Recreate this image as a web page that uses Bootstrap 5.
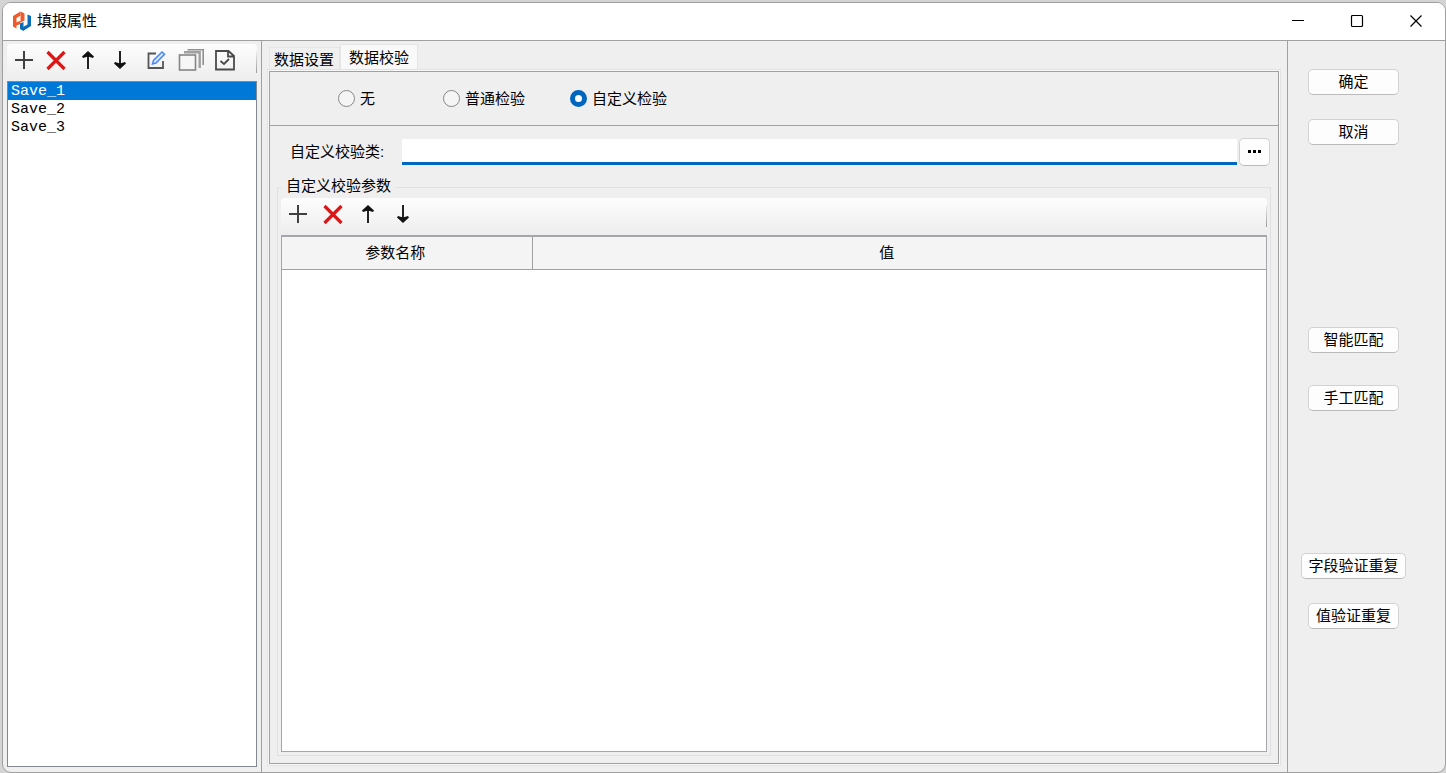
<!DOCTYPE html>
<html lang="zh-CN">
<head>
<meta charset="utf-8">
<meta name="viewport" content="width=device-width, initial-scale=1">
<title>填报属性</title>
<link href="https://cdn.jsdelivr.net/npm/bootstrap@5.3.0/dist/css/bootstrap.min.css" rel="stylesheet">
<style>
  :root { --face: #efefef; --line: #a0a0a0; --accent: #0067c0; }
  body { font: 15px/20px "Liberation Sans", "Noto Sans CJK SC", sans-serif; color: #000; background: #d4d4d4; padding: 2px 0 0 2px; }
  button { font: inherit; color: inherit; }
  .dialog { background: var(--face); border: 1px solid var(--line); border-radius: 9px; }
  .title-bar { height: 38px; padding-bottom: 2px; background: #fff; border-bottom: 1px solid var(--line); }
  .title-bar h1 { font-size: 15px; line-height: 20px; }
  .win-btn { width: 59px; height: 34px; }
  .side { width: 259px; padding: 3px 4px 5px; border-right: 1px solid var(--line); }
  .tools { height: 37px; padding-bottom: 5px; background: linear-gradient(#fdfdfd, #ededed); border-radius: 4px; position: relative; }
  .tools::after { content: ""; position: absolute; right: 0; top: 7px; bottom: 8px; width: 1px; background: linear-gradient(#eee, #999); }
  .tools svg { display: block; }
  .tool { width: 20px; height: 24px; }
  .side-tools { padding-left: 7px; }
  .param-tools { padding-left: 7px; gap: 15px; }
  .files { border: 1px solid #828790; background: #fff; font: 15px/18px "Liberation Mono", monospace; }
  .files button { padding: 0 3px; height: 18px; line-height: 20px; }
  .files .chosen { background: #0078d7; color: #fff; }
  .main-part { padding: 3px 8px 8px 7px; }
  .tab-btn { height: 24px; border: 1px solid #e5e5e5; border-bottom: 0; padding: 0 5px 0 4px; background: #f0f0f0; line-height: 22px; }
  .tab-btn.chosen { height: 27px; background: #f9f9f9; padding: 0 8px; }
  .page-edge { border: 1px solid var(--line); outline: 1px solid #f9f9f9; box-shadow: 0 0 0 2px #e2e2e2; }
  .kinds { height: 54px; border-bottom: 1px solid var(--line); padding-left: 68px; }
  .kinds .form-check-input { width: 17px; height: 17px; margin: 0 5px 0 0; border: 1px solid #868686; background-color: #f5f5f5; }
  .kinds .form-check-input:checked { border: 5px solid var(--accent); background: #fff; }
  .kinds .gap-wide { margin-right: 64px; }
  .kinds .gap-mid { margin-right: 45px; }
  .class-label { margin: 0 18px 0 4px; }
  .class-input { height: 26px; border: 0; border-bottom: 3px solid var(--accent); border-radius: 0; background: #fff; }
  .push { min-width: 91px; height: 26px; padding: 0 6px; background: #fdfdfd; border: 1px solid #d2d2d2; border-bottom-color: #bababa; border-radius: 5px; line-height: 24px; }
  .push-dots { min-width: 31px; height: 28px; margin-left: 2px; }
  .params { border: 1px solid #e0e0e0; margin: 21px 7px 7px; padding: 0 3px 3px; }
  .params legend { float: none; width: auto; font-size: 15px; line-height: 20px; padding: 0 5px; margin: -12px 0 2px; background: var(--face); align-self: flex-start; }
  .grid-box { border: 1px solid #a5a5ab; border-top-width: 2px; background: #fff; }
  .grid-box th { height: 32px; font-weight: 400; text-align: center; padding: 0; background: #f4f4f4; border-bottom: 1px solid var(--line); }
  .grid-box th:first-child { width: 25.5%; padding-right: 24px; border-right: 1px solid var(--line); }
  .grid-box th:last-child { padding-right: 26px; }
  .actions { width: 158px; padding: 28px 26px 0 0; border-left: 1px solid var(--line); }
  .group-match { margin-top: 182px; }
  .group-check { margin-top: 142px; }
</style>
</head>
<body class="vh-100 overflow-hidden">
<svg width="0" height="0" class="position-absolute" aria-hidden="true">
  <defs>
    <symbol id="i-plus" viewBox="0 0 20 24"><path d="M10 3v18M1 12h18" stroke="#404040" stroke-width="2" fill="none"/></symbol>
    <symbol id="i-cross" viewBox="0 0 20 24"><path d="M1.5 4l17 17M18.5 4l-17 17" stroke="#dc1717" stroke-width="3.200" fill="none"/></symbol>
    <symbol id="i-up" viewBox="0 0 20 24"><path d="M10 21V6" stroke="#222" stroke-width="2"/><path d="M10 3l6 5.500-1 1.500L10 8.500 5 10 4 8.500z" fill="#111"/></symbol>
    <symbol id="i-down" viewBox="0 0 20 24"><path d="M10 3v15" stroke="#222" stroke-width="2"/><path d="M10 21l6-5.500-1-1.500-5 1.500L5 14l-1 1.500z" fill="#111"/></symbol>
  </defs>
</svg>

<div class="dialog h-100 d-flex flex-column overflow-hidden">
  <header class="title-bar d-flex align-items-center flex-shrink-0">
    <svg class="ms-2 me-1" width="22" height="22" viewBox="0 0 22 22" aria-hidden="true">
      <path d="M2 6l7.500-4.500v4L5.500 8v4.500l4-2v3.500l-4 1.500v3L2 16.500z" fill="#f15a2b"/>
      <path d="M9.500 1.500L13.500 3.500v7L9.500 12.500z" fill="#f15a2b"/>
      <path d="M20 16l-8 5v-4l4.500-2.500V4.500L20 6z" fill="#0b6db8"/>
      <path d="M12.500 21L9 19v-5.500l3.500-1.500z" fill="#0b6db8"/>
    </svg>
    <h1 class="m-0 fw-normal">填报属性</h1>
    <div class="ms-auto d-flex">
      <button class="win-btn btn p-0 border-0 rounded-0" aria-label="最小化"><svg width="14" height="14" viewBox="0 0 14 14"><path d="M1 6.500h12" stroke="#000"/></svg></button>
      <button class="win-btn btn p-0 border-0 rounded-0" aria-label="最大化"><svg width="14" height="14" viewBox="0 0 14 14"><rect x="1.500" y="1.500" width="11" height="11" rx="1" fill="none" stroke="#000" stroke-width="1.200"/></svg></button>
      <button class="win-btn btn p-0 border-0 rounded-0" aria-label="关闭"><svg width="14" height="14" viewBox="0 0 14 14"><path d="M1.500 1.500l11 11M12.500 1.500l-11 11" stroke="#000" stroke-width="1.200"/></svg></button>
    </div>
  </header>

  <div class="d-flex flex-grow-1">
    <aside class="side d-flex flex-column flex-shrink-0">
      <div class="tools side-tools d-flex align-items-center gap-2 flex-shrink-0">
        <button class="btn p-0 border-0 me-1" aria-label="添加"><svg class="tool"><use href="#i-plus"/></svg></button>
        <button class="btn p-0 border-0 me-1" aria-label="删除"><svg class="tool"><use href="#i-cross"/></svg></button>
        <button class="btn p-0 border-0 me-1" aria-label="上移"><svg class="tool"><use href="#i-up"/></svg></button>
        <button class="btn p-0 border-0 me-2" aria-label="下移"><svg class="tool"><use href="#i-down"/></svg></button>
        <button class="btn p-0 border-0 me-1" aria-label="编辑"><svg class="tool" viewBox="0 0 20 24"><path d="M10 5.500H2.500v14.500h14.500V13" fill="none" stroke="#555" stroke-width="1.800"/><path d="M6.500 16l1-3.500L16 4l2.500 2.300L10 15z" fill="#d9e7ff" stroke="#4a86f0" stroke-width="1.500"/></svg></button>
        <button class="btn p-0 border-0" aria-label="复制"><svg width="28" height="24" viewBox="0 0 28 24"><path d="M9.500 1.800h15.700V17" fill="none" stroke="#909090" stroke-width="1.600"/><path d="M6 4.300h15.700V20" fill="none" stroke="#a0a0a0" stroke-width="2.400"/><rect x="1.500" y="7" width="16" height="15" fill="#f7f7f7" stroke="#858585" stroke-width="1.600"/></svg></button>
        <button class="btn p-0 border-0" aria-label="校验"><svg width="22" height="24" viewBox="0 0 22 24"><path d="M2 3h12.500l5.500 5v13.500H2zM14 3v5.500h6" fill="none" stroke="#4a4a4a" stroke-width="1.800"/><path d="M6.500 13l3.500 3 5-5" fill="none" stroke="#4a4a4a" stroke-width="1.800"/></svg></button>
      </div>
      <div class="files flex-grow-1 d-flex flex-column">
        <button class="chosen border-0 text-start">Save_1</button>
        <button class="bg-transparent border-0 text-start">Save_2</button>
        <button class="bg-transparent border-0 text-start">Save_3</button>
      </div>
    </aside>

    <main class="main-part flex-grow-1 d-flex flex-column">
      <div class="d-flex align-items-end" role="tablist">
        <button class="tab-btn" role="tab" aria-selected="false">数据设置</button>
        <button class="tab-btn chosen" role="tab" aria-selected="true">数据校验</button>
      </div>
      <section class="page-edge flex-grow-1 d-flex flex-column">
        <div class="kinds d-flex align-items-center">
          <div class="gap-wide d-flex align-items-center"><input class="form-check-input" type="radio" name="kind" id="k0"><label for="k0" class="me-1">无</label></div>
          <div class="gap-mid d-flex align-items-center"><input class="form-check-input" type="radio" name="kind" id="k1"><label for="k1">普通检验</label></div>
          <div class="d-flex align-items-center"><input class="form-check-input" type="radio" name="kind" id="k2" checked><label for="k2">自定义检验</label></div>
        </div>
        <div class="d-flex align-items-center mt-2 pt-1 ps-3 pe-2">
          <label for="cls" class="class-label flex-shrink-0">自定义校验类:</label>
          <input id="cls" type="text" class="class-input flex-grow-1">
          <button class="push push-dots" aria-label="浏览"><svg class="d-block mx-auto" width="14" height="4" viewBox="0 0 14 4"><path d="M0 0h3v3H0zM5 0h3v3H5zM10 0h3v3h-3z"/></svg></button>
        </div>
        <div class="params flex-grow-1 d-flex flex-column" role="group" aria-labelledby="pg">
          <legend id="pg">自定义校验参数</legend>
          <div class="tools param-tools d-flex align-items-center flex-shrink-0">
            <button class="btn p-0 border-0" aria-label="添加参数"><svg class="tool"><use href="#i-plus"/></svg></button>
            <button class="btn p-0 border-0" aria-label="删除参数"><svg class="tool"><use href="#i-cross"/></svg></button>
            <button class="btn p-0 border-0" aria-label="上移参数"><svg class="tool"><use href="#i-up"/></svg></button>
            <button class="btn p-0 border-0" aria-label="下移参数"><svg class="tool"><use href="#i-down"/></svg></button>
          </div>
          <div class="grid-box flex-grow-1">
            <table class="w-100"><thead><tr><th scope="col">参数名称</th><th scope="col">值</th></tr></thead></table>
          </div>
        </div>
      </section>
    </main>

    <aside class="actions flex-shrink-0 d-flex flex-column align-items-center">
      <div class="d-grid gap-4"><button class="push">确定</button><button class="push">取消</button></div>
      <div class="group-match d-grid gap-4"><button class="push mb-2">智能匹配</button><button class="push">手工匹配</button></div>
      <div class="group-check d-flex flex-column align-items-center gap-4"><button class="push">字段验证重复</button><button class="push">值验证重复</button></div>
    </aside>
  </div>
</div>
<script src="https://cdn.jsdelivr.net/npm/bootstrap@5.3.0/dist/js/bootstrap.bundle.min.js"></script>
</body>
</html>
